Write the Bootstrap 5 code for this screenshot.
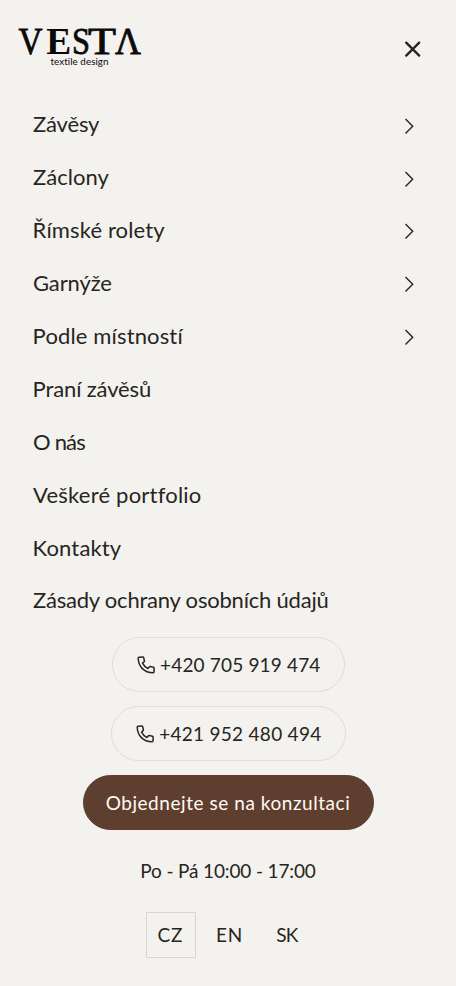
<!DOCTYPE html>
<html lang="cs">
<head>
<meta charset="utf-8">
<meta name="viewport" content="width=device-width, initial-scale=1">
<title>VESTA textile design</title>
<link href="https://cdn.jsdelivr.net/npm/bootstrap@5.3.0/dist/css/bootstrap.min.css" rel="stylesheet">
<style>
body{background:#f3f2ee;color:#272521;font-family:Lato,"Open Sans",sans-serif;font-size:19px;line-height:28px;font-variant-ligatures:none}
a{color:inherit;text-decoration:none}
svg{display:block;flex:none}
.menu-head{height:98px;padding:14px 33px 0 10px}
.close-btn{width:22px;height:22px;margin-top:24px;color:#272521}
.menu-list{padding:0 42px 0 33px}
.menu-list a{height:52.9px;font-size:22px;line-height:30px}
.menu-list svg{margin-top:1.5px}
.menu-list .pull{margin-left:-.4px}
.ls-a{letter-spacing:-.15px}.ls-b{letter-spacing:.05px}.ls-c{letter-spacing:.14px}
.ls-d{letter-spacing:-.8px}.ls-e{letter-spacing:.22px}.ls-f{letter-spacing:-.21px}.ls-g{letter-spacing:-.13px}
.pill{height:55px;border:1.5px solid #dfddd8;padding:1px 23px 0 24px}
.pill:hover{border-color:#c8c4bc}
.pill-one{width:233px;letter-spacing:.16px}.pill-two{width:235px;letter-spacing:.28px}
.pill-main{width:291px;background:#5e3e2f;border-color:#5e3e2f;color:#fffaf3;letter-spacing:.55px}
.contact{gap:14px;padding-top:10.2px}
.hours{margin-top:26.8px;letter-spacing:-.14px}
.langs{margin-top:27px;height:46px}
.langs a{height:46px;border:1px solid transparent}
.langs .current{width:50px;border-color:#d9d6d0;letter-spacing:1px}
.lang-en{width:68px;letter-spacing:.8px}.lang-sk{width:47px;letter-spacing:-.6px}
</style>
</head>
<body>
<header class="menu-head d-flex justify-content-between align-items-start">
  <a href="#" aria-label="VESTA textile design">
    <svg width="140" height="60" viewBox="10 14 140 60" fill="#0b0a09">
      <g font-family="Liberation Serif, serif" font-size="37.5" stroke="#0b0a09" stroke-width=".5">
        <text x="18.5" y="54.3" textLength="24" lengthAdjust="spacingAndGlyphs" stroke-width=".8">V</text>
        <text x="46.2" y="54.3" textLength="25" lengthAdjust="spacingAndGlyphs" font-weight="bold" stroke="none">E</text>
        <text x="72" y="54.3" textLength="18" lengthAdjust="spacingAndGlyphs" stroke-width=".8">S</text>
        <text x="88" y="54.3" textLength="28" lengthAdjust="spacingAndGlyphs" stroke-width=".8">T</text>
        <text x="115" y="54.3" textLength="26" lengthAdjust="spacingAndGlyphs" stroke-width=".8">Λ</text>
      </g>
      <text x="50.5" y="65.3" font-family="Lato, sans-serif" font-size="9.8" textLength="58" lengthAdjust="spacing">textile design</text>
    </svg>
  </a>
  <button type="button" class="close-btn btn p-0 border-0" aria-label="Zavřít">
    <svg width="22" height="22" viewBox="0 0 22 22" fill="none" stroke="currentColor" stroke-width="2.3" stroke-linecap="round"><path d="M5.2 4.6 18.2 17.6M18.2 4.6 5.2 17.6"/></svg>
  </button>
</header>

<nav class="menu-list d-flex flex-column">
  <a href="#" class="d-flex align-items-center justify-content-between"><span class="ls-a">Závěsy</span><svg width="10" height="17" viewBox="0 0 10 17" fill="none" stroke="currentColor" stroke-width="1.4"><path d="M1.5 2 8.7 9.2 1.5 16.4"/></svg></a>
  <a href="#" class="d-flex align-items-center justify-content-between"><span class="ls-b">Záclony</span><svg width="10" height="17" viewBox="0 0 10 17" fill="none" stroke="currentColor" stroke-width="1.4"><path d="M1.5 2 8.7 9.2 1.5 16.4"/></svg></a>
  <a href="#" class="d-flex align-items-center justify-content-between"><span class="ls-c pull">Římské rolety</span><svg width="10" height="17" viewBox="0 0 10 17" fill="none" stroke="currentColor" stroke-width="1.4"><path d="M1.5 2 8.7 9.2 1.5 16.4"/></svg></a>
  <a href="#" class="d-flex align-items-center justify-content-between"><span class="ls-g">Garnýže</span><svg width="10" height="17" viewBox="0 0 10 17" fill="none" stroke="currentColor" stroke-width="1.4"><path d="M1.5 2 8.7 9.2 1.5 16.4"/></svg></a>
  <a href="#" class="d-flex align-items-center justify-content-between"><span class="ls-c pull">Podle místností</span><svg width="10" height="17" viewBox="0 0 10 17" fill="none" stroke="currentColor" stroke-width="1.4"><path d="M1.5 2 8.7 9.2 1.5 16.4"/></svg></a>
  <a href="#" class="d-flex align-items-center"><span class="ls-g pull">Praní závěsů</span></a>
  <a href="#" class="d-flex align-items-center"><span class="ls-d">O nás</span></a>
  <a href="#" class="d-flex align-items-center"><span class="ls-e">Veškeré portfolio</span></a>
  <a href="#" class="d-flex align-items-center"><span class="ls-c pull">Kontakty</span></a>
  <a href="#" class="d-flex align-items-center"><span class="ls-f">Zásady ochrany osobních údajů</span></a>
</nav>

<div class="contact d-flex flex-column align-items-center">
  <a href="tel:+420705919474" class="pill pill-one rounded-pill d-flex align-items-center justify-content-between">
    <svg width="18" height="18" viewBox="0 0 18 18" fill="none" stroke="currentColor" stroke-width="1.5" stroke-linejoin="round"><path d="M2 1.2 5.8.9Q6.5.9 6.7 1.6L7.4 4.8Q7.5 5.4 7 5.8L5.5 7.1Q7.4 10.7 10.9 12.5L12.2 11Q12.6 10.5 13.2 10.6L16.4 11.3Q17.1 11.5 17.1 12.2V15.6Q17 16.6 16 16.8 9.4 16.6 5.4 12.6 1.4 8.6 1.2 2.2 1.2 1.3 2 1.2Z"/></svg><span>+420 705 919 474</span>
  </a>
  <a href="tel:+421952480494" class="pill pill-two rounded-pill d-flex align-items-center justify-content-between">
    <svg width="18" height="18" viewBox="0 0 18 18" fill="none" stroke="currentColor" stroke-width="1.5" stroke-linejoin="round"><path d="M2 1.2 5.8.9Q6.5.9 6.7 1.6L7.4 4.8Q7.5 5.4 7 5.8L5.5 7.1Q7.4 10.7 10.9 12.5L12.2 11Q12.6 10.5 13.2 10.6L16.4 11.3Q17.1 11.5 17.1 12.2V15.6Q17 16.6 16 16.8 9.4 16.6 5.4 12.6 1.4 8.6 1.2 2.2 1.2 1.3 2 1.2Z"/></svg><span>+421 952 480 494</span>
  </a>
  <a href="#" class="pill pill-main rounded-pill d-flex align-items-center justify-content-center px-0">Objednejte se na konzultaci</a>
</div>
<div class="hours text-center">Po - Pá 10:00 - 17:00</div>
<div class="langs d-flex justify-content-center">
  <a href="#" class="current d-flex align-items-center justify-content-center">CZ</a>
  <a href="#" class="lang-en d-flex align-items-center justify-content-center">EN</a>
  <a href="#" class="lang-sk d-flex align-items-center justify-content-center">SK</a>
</div>
<script src="https://cdn.jsdelivr.net/npm/bootstrap@5.3.0/dist/js/bootstrap.bundle.min.js"></script>
</body>
</html>
